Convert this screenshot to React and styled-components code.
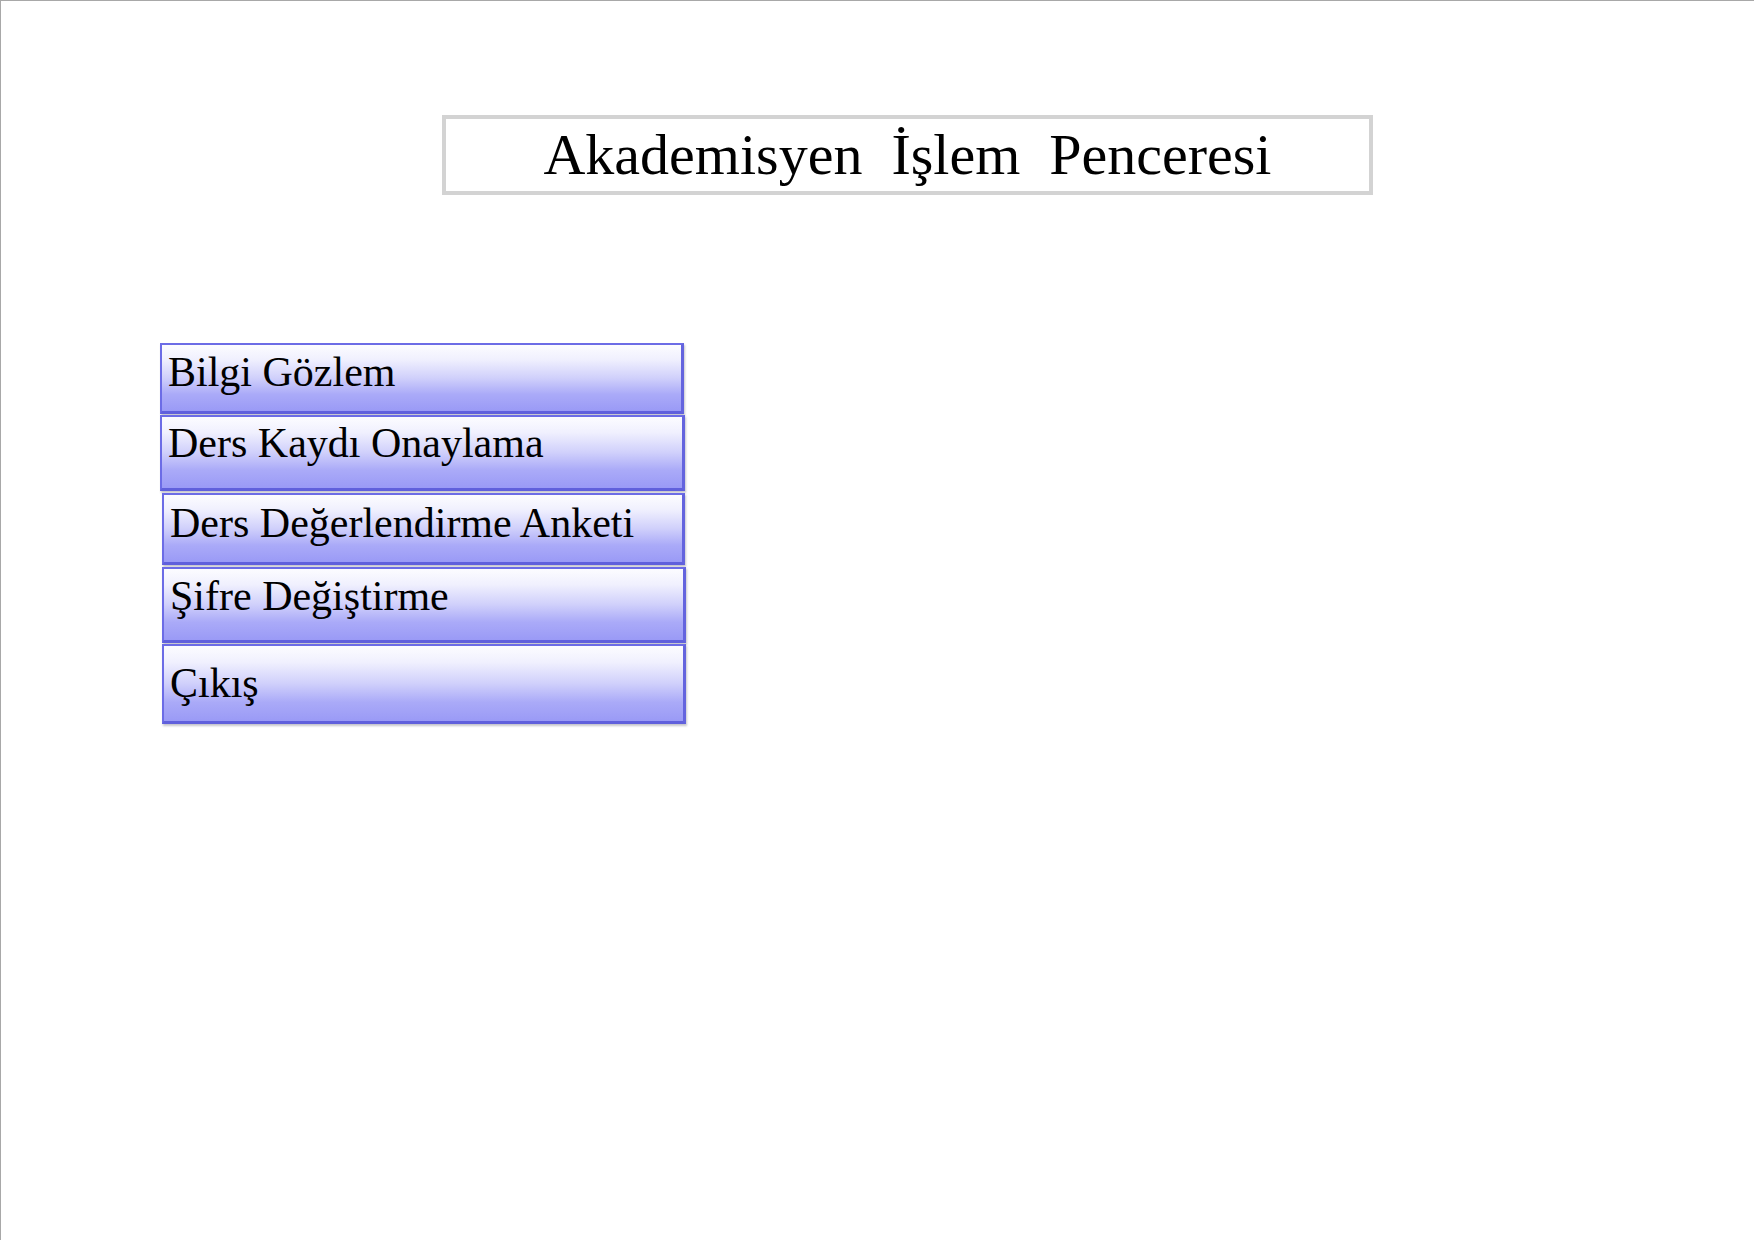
import React from 'react'
import styled, { createGlobalStyle } from 'styled-components'

const GlobalStyle = createGlobalStyle`
  html, body {
    margin: 0;
    padding: 0;
    background: #ffffff;
  }
  body {
    font-family: "Liberation Serif", "Times New Roman", serif;
  }
`

const Page = styled.div`
  box-sizing: border-box;
  width: 1754px;
  height: 1240px;
  border-top: 1px solid #a8a8a8;
  border-left: 1px solid #a8a8a8;
  padding-top: 114px;
  display: flex;
  flex-direction: column;
`

const TitleRow = styled.div`
  display: flex;
  padding-left: 441px;
`

const TitleBox = styled.div`
  box-sizing: border-box;
  width: 931px;
  height: 80px;
  border: 4px solid #d3d3d3;
  display: flex;
  align-items: center;
  justify-content: center;
`

const Title = styled.h1`
  margin: 0;
  font-family: "Liberation Serif", "Times New Roman", serif;
  font-weight: normal;
  font-size: 58px;
  line-height: 1;
  color: #000;
  white-space: pre;
`

const Menu = styled.nav`
  display: flex;
  flex-direction: column;
  margin-top: 148px;
  padding-left: 159px;
  width: 527px;
`

const MenuButton = styled.button`
  box-sizing: border-box;
  display: flex;
  align-items: flex-start;
  width: ${p => p.$width}px;
  height: ${p => p.$height}px;
  margin-left: ${p => p.$shift}px;
  margin-top: ${p => p.$gap}px;
  padding: ${p => p.$top}px 0 0 6px;
  text-align: left;
  border: 2px solid #6c6ce6;
  border-right: 3px solid #6464de;
  border-bottom: 3px solid #6060dc;
  box-shadow: 1px 2px 2px rgba(90, 90, 110, 0.35);
  background: linear-gradient(
    to bottom,
    #fcfcff 0%,
    #f0f0fe 22%,
    #d0d0fb 50%,
    #aaaaf8 75%,
    #9a9af6 100%
  );
  font-family: "Liberation Serif", "Times New Roman", serif;
  font-size: 42px;
  line-height: 1;
  color: #000;
  cursor: pointer;
`

const items = [
  { label: 'Bilgi Gözlem', width: 524, height: 71, shift: 0, gap: 0, top: 6 },
  { label: 'Ders Kaydı Onaylama', width: 525, height: 76, shift: 0, gap: 1, top: 5 },
  { label: 'Ders Değerlendirme Anketi', width: 523, height: 72, shift: 2, gap: 2, top: 7 },
  { label: 'Şifre Değiştirme', width: 524, height: 76, shift: 2, gap: 2, top: 6 },
  { label: 'Çıkış', width: 524, height: 80, shift: 2, gap: 1, top: 16 },
]

export default function App() {
  return (
    <Page>
      <GlobalStyle />
      <TitleRow>
        <TitleBox>
          <Title>{'Akademisyen  İşlem  Penceresi'}</Title>
        </TitleBox>
      </TitleRow>
      <Menu>
        {items.map(item => (
          <MenuButton
            key={item.label}
            $width={item.width}
            $height={item.height}
            $shift={item.shift}
            $gap={item.gap}
            $top={item.top}>
            {item.label}
          </MenuButton>
        ))}
      </Menu>
    </Page>
  )
}
